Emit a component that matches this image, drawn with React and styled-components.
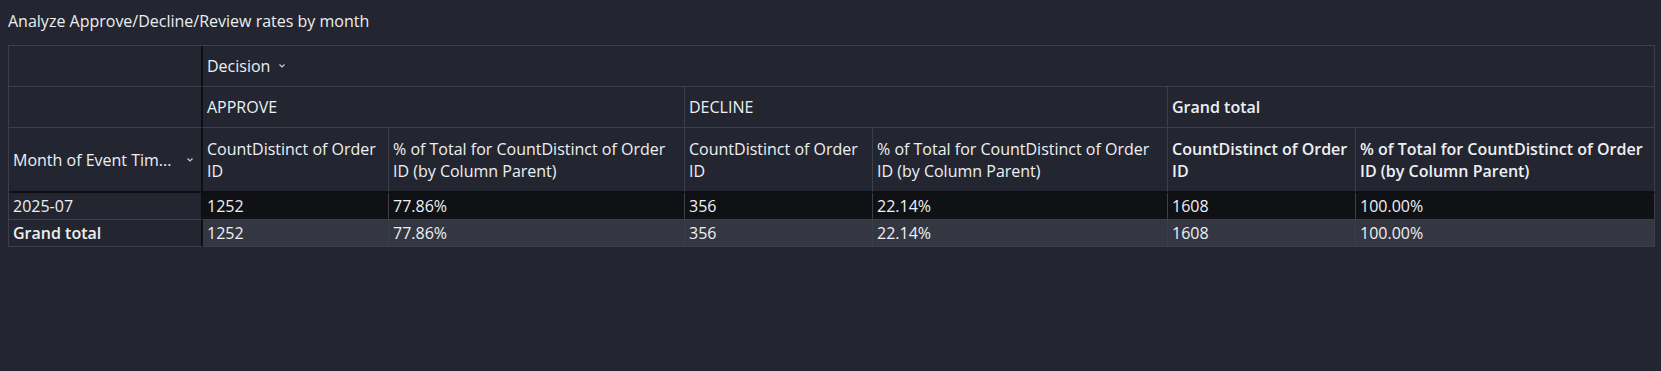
import React from "react";
import styled, { createGlobalStyle } from "styled-components";

const GlobalStyle = createGlobalStyle`
  html, body {
    margin: 0;
    background: #232630;
  }
  body {
    padding: 8px 6px 8px 8px;
    font-family: "Open Sans", "Noto Sans", sans-serif;
    color: #eceef2;
  }
`;

const Title = styled.div`
  font-size: 16px;
  line-height: 24px;
  padding: 1px 0 12px 0;
`;

const Pivot = styled.div`
  display: grid;
  grid-template-columns: 194px 186px 296px 188px 295px 188px 1fr;
  grid-template-rows: 41px 41px 65px 27px 27px;
  border-top: 1px solid #3c3f4a;
  border-left: 1px solid #3c3f4a;
  font-size: 16px;
  line-height: 22px;
`;

const Cell = styled.div`
  grid-column: span ${(p) => p.span || 1};
  display: flex;
  align-items: center;
  padding: 0 4px;
  min-width: 0;
  border-right: ${(p) => (p.axis ? "2px solid #0e0f13" : "1px solid #3c3f4a")};
  border-bottom: ${(p) => (p.last ? "2px solid #0e0f13" : "1px solid #3c3f4a")};
  background: ${(p) =>
    p.tone === "dark" ? "#101115" : p.tone === "total" ? "#343741" : "transparent"};
  font-weight: ${(p) => (p.bold ? 600 : 400)};
  color: #eef0f3;
`;

const Label = styled.span`
  flex: 1;
  min-width: 0;
  overflow: hidden;
  text-overflow: ellipsis;
  white-space: nowrap;
`;

const Chevron = styled.svg`
  flex: none;
  width: 8px;
  height: 6px;
  margin-left: ${(p) => p.gap || 0}px;
  margin-right: ${(p) => p.right || 0}px;
`;

const Down = (props) => (
  <Chevron viewBox="0 0 8 6" {...props}>
    <polyline points="1.5,1.5 4,4 6.5,1.5" fill="none" stroke="#c9ccd3" strokeWidth="1.2" />
  </Chevron>
);

const measures = [
  "CountDistinct of Order ID",
  "% of Total for CountDistinct of Order ID (by Column Parent)",
];

const groups = [
  { name: "APPROVE", bold: false, count: "1252", pct: "77.86%" },
  { name: "DECLINE", bold: false, count: "356", pct: "22.14%" },
  { name: "Grand total", bold: true, count: "1608", pct: "100.00%" },
];

export default function App() {
  return (
    <>
      <GlobalStyle />
      <Title>Analyze Approve/Decline/Review rates by month</Title>
      <Pivot>
        <Cell axis />
        <Cell span={6}>
          Decision
          <Down gap={8} />
        </Cell>

        <Cell axis />
        {groups.map((g) => (
          <Cell key={g.name} span={2} bold={g.bold}>
            {g.name}
          </Cell>
        ))}

        <Cell axis last>
          <Label>Month of Event Tim...</Label>
          <Down right={3} />
        </Cell>
        {groups.map((g) =>
          measures.map((m) => (
            <Cell key={g.name + m} last bold={g.bold}>
              {m}
            </Cell>
          ))
        )}

        <Cell axis>2025-07</Cell>
        {groups.map((g) => (
          <React.Fragment key={g.name}>
            <Cell tone="dark">{g.count}</Cell>
            <Cell tone="dark">{g.pct}</Cell>
          </React.Fragment>
        ))}

        <Cell axis bold>
          Grand total
        </Cell>
        {groups.map((g) => (
          <React.Fragment key={g.name}>
            <Cell tone="total">{g.count}</Cell>
            <Cell tone="total">{g.pct}</Cell>
          </React.Fragment>
        ))}
      </Pivot>
    </>
  );
}
